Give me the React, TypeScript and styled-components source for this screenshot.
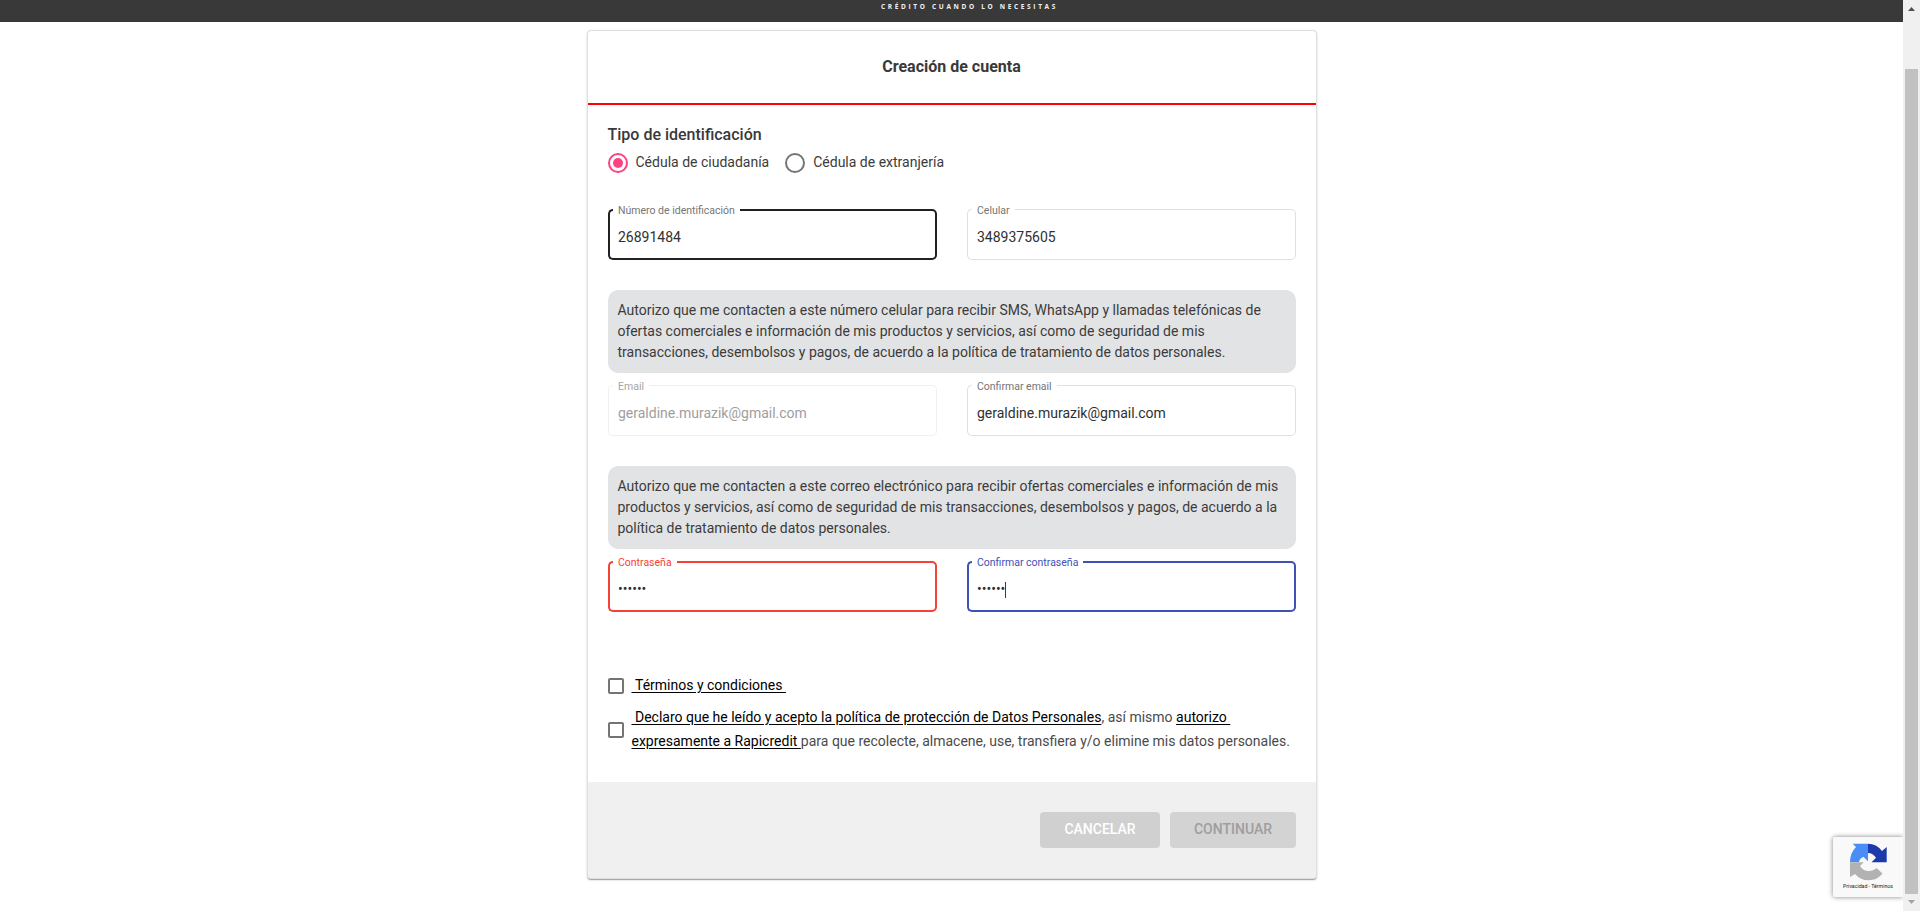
import React from "react";
import styled, { createGlobalStyle } from "styled-components";

const GlobalStyle = createGlobalStyle`
  *, *::before, *::after { box-sizing: border-box; }
  html, body { margin: 0; height: 100%; overflow: hidden; background: #fff; }
  body { font-family: Roboto, "Liberation Sans", sans-serif; font-size: 14px; color: #3b3b3b; }
`;

const Screen = styled.div`
  display: flex;
  width: 1920px;
  height: 911px;
  overflow: hidden;
`;

const Page = styled.div`
  position: relative;
  flex: 1;
  display: flex;
  flex-direction: column;
  align-items: center;
  overflow: hidden;
`;

const TopBar = styled.header`
  display: flex;
  justify-content: center;
  width: 100%;
  height: 22px;
  flex: none;
  padding-left: 36px;
  background: #393939;
`;

const Tagline = styled.span`
  margin-top: 2px;
  font: 700 6.5px/9px "Open Sans", sans-serif;
  letter-spacing: 2.67px;
  color: #f2f2f2;
  white-space: nowrap;
`;

const Card = styled.main`
  width: 730px;
  height: 849px;
  margin-top: 8px;
  flex: none;
  display: flex;
  flex-direction: column;
  border: 1px solid #dedede;
  border-radius: 4px;
  background: #fff;
  overflow: hidden;
  box-shadow: 0 2px 1px -1px rgba(0, 0, 0, 0.2), 0 1px 1px 0 rgba(0, 0, 0, 0.14),
    0 1px 3px 0 rgba(0, 0, 0, 0.12);
`;

const CardHeader = styled.h1`
  height: 74px;
  margin: 0;
  padding-bottom: 2px;
  display: flex;
  align-items: center;
  justify-content: center;
  border-bottom: 2px solid #f00;
  font-size: 16px;
  font-weight: 700;
  letter-spacing: 0;
  color: #393939;
`;

const Body = styled.form`
  display: flex;
  flex-direction: column;
  height: 677px;
  padding: 18px 20px 0;
`;

const GroupTitle = styled.h2`
  margin: 0;
  font-size: 16px;
  line-height: 24px;
  font-weight: 500;
  color: #393939;
`;

const RadioRow = styled.div`
  display: flex;
  gap: 16px;
  height: 20px;
  margin-top: 6px;
  margin-bottom: 36px;
`;

const RadioOption = styled.label`
  display: flex;
  align-items: center;
  gap: 8px;
  line-height: 18px;
  white-space: nowrap;

  span { position: relative; top: -1px; }
`;

const RadioMark = styled.i<{ $on?: boolean }>`
  width: 20px;
  height: 20px;
  border-radius: 50%;
  border: 2px solid ${(p) => (p.$on ? "#ff4081" : "#757575")};
  display: grid;
  place-items: center;

  &::after {
    content: "";
    width: 10px;
    height: 10px;
    border-radius: 50%;
    background: ${(p) => (p.$on ? "#ff4081" : "transparent")};
  }
`;

const FieldRow = styled.div`
  display: grid;
  grid-template-columns: 329px 329px;
  column-gap: 30px;
  height: 51px;
`;

type Tone = "idle" | "hover" | "disabled" | "error" | "focus";
const outlineColor: Record<Tone, string> = {
  idle: "#e0e0e0",
  hover: "#212121",
  disabled: "#f0f0f0",
  error: "#f44336",
  focus: "#3f51b5",
};
const labelColor: Record<Tone, string> = {
  idle: "#757575",
  hover: "#757575",
  disabled: "#a5a5a5",
  error: "#f44336",
  focus: "#3f51b5",
};
const thickness = (t: Tone) => (t === "idle" || t === "disabled" ? "1px" : "2px");

const FieldBox = styled.div<{ $tone: Tone }>`
  display: grid;
  grid-template: 51px / 329px;
  --line: ${(p) => thickness(p.$tone)} solid ${(p) => outlineColor[p.$tone]};
`;

const Outline = styled.div`
  grid-area: 1 / 1;
  display: flex;
`;

const OutlineStart = styled.div`
  width: 5px;
  border: var(--line);
  border-right: none;
  border-radius: 5px 0 0 5px;
`;

const OutlineEnd = styled.div`
  flex: 1;
  border: var(--line);
  border-left: none;
  border-radius: 0 5px 5px 0;
`;

const Notch = styled.div<{ $tone: Tone }>`
  padding: 0 5px 0 5.5px;
  border-bottom: var(--line);
  font-size: 10.5px;
  line-height: 12px;
  white-space: nowrap;
  color: ${(p) => labelColor[p.$tone]};

  span { display: block; margin-top: -4px; }
`;

const Value = styled.div<{ $tone: Tone }>`
  grid-area: 1 / 1;
  display: flex;
  align-items: center;
  padding: 4px 10.5px 0;
  line-height: 16px;
  color: ${(p) => (p.$tone === "disabled" ? "#9e9e9e" : "#303030")};
`;

const Caret = styled.i`
  width: 1px;
  height: 16px;
  margin-top: 2px;
  background: #26348b;
`;

const Note = styled.p<{ $gapAfter: number }>`
  width: 688px;
  height: 83px;
  margin: 30px 0 ${(p) => p.$gapAfter}px;
  padding: 10px;
  border-radius: 10px;
  background: #e2e3e5;
  line-height: 21px;
  white-space: nowrap;
`;

const Consent = styled.label<{ $top: number }>`
  display: flex;
  align-items: center;
  gap: 8px;
  margin-top: ${(p) => p.$top}px;
  line-height: 24px;
  color: #4a4a4a;
  white-space: nowrap;

  u {
    color: #000;
    white-space: pre;
    text-underline-offset: 2px;
    text-decoration-skip-ink: auto;
  }
`;

const CheckMark = styled.i`
  width: 16px;
  height: 16px;
  flex: none;
  border: 2px solid #757575;
  border-radius: 2px;
`;

const ConsentText = styled.span`
  position: relative;
  top: -1px;
`;

const Footer = styled.footer`
  flex: 1;
  display: flex;
  justify-content: flex-end;
  gap: 10px;
  padding: 30px 20px 0;
  background: #f0f0f0;
`;

const Action = styled.button<{ $kind: "cancel" | "next" }>`
  width: ${(p) => (p.$kind === "cancel" ? 120 : 126)}px;
  height: 36px;
  padding: 0 0 2px 1px;
  border: 0;
  border-radius: 4px;
  font: 500 14px/34px Roboto, sans-serif;
  background: ${(p) => (p.$kind === "cancel" ? "#d0d0d0" : "#d3d3d3")};
  color: ${(p) => (p.$kind === "cancel" ? "#fff" : "#9e9e9e")};
`;

const Badge = styled.aside`
  position: absolute;
  right: 0;
  top: 837px;
  width: 70px;
  height: 60px;
  border-radius: 2px 0 0 2px;
  background: #f9f9f9;
  box-shadow: 0 0 5px gray;
  display: flex;
  flex-direction: column;
  align-items: center;
  padding-top: 6px;
`;

const BadgeText = styled.span`
  font: 5.2px/9px Roboto, sans-serif;
  color: #222;
  white-space: nowrap;
`;

const Scrollbar = styled.div`
  width: 17px;
  display: flex;
  flex-direction: column;
  align-items: center;
  background: #f0f0f0;
`;

const ScrollThumb = styled.div`
  width: 13px;
  height: 825px;
  margin-top: 52px;
  background: #c1c1c1;
`;

const Arrow = styled.svg`
  width: 17px;
  height: 17px;
  flex: none;
`;

function Field({ label, value, tone = "idle", caret }: { label: string; value: string; tone?: Tone; caret?: boolean }) {
  return (
    <FieldBox $tone={tone}>
      <Outline>
        <OutlineStart />
        <Notch $tone={tone}><span>{label}</span></Notch>
        <OutlineEnd />
      </Outline>
      <Value $tone={tone}>{value}{caret && <Caret />}</Value>
    </FieldBox>
  );
}

export default function App() {
  return (
    <>
      <GlobalStyle />
      <Screen>
        <Page>
          <TopBar><Tagline>CRÉDITO CUANDO LO NECESITAS</Tagline></TopBar>
          <Card>
            <CardHeader>Creación de cuenta</CardHeader>
            <Body>
              <GroupTitle>Tipo de identificación</GroupTitle>
              <RadioRow>
                <RadioOption><RadioMark $on /><span>Cédula de ciudadanía</span></RadioOption>
                <RadioOption><RadioMark /><span>Cédula de extranjería</span></RadioOption>
              </RadioRow>
              <FieldRow>
                <Field label="Número de identificación" value="26891484" tone="hover" />
                <Field label="Celular" value="3489375605" />
              </FieldRow>
              <Note $gapAfter={12}>
                Autorizo que me contacten a este número celular para recibir SMS, WhatsApp y llamadas telefónicas de<br />
                ofertas comerciales e información de mis productos y servicios, así como de seguridad de mis<br />
                transacciones, desembolsos y pagos, de acuerdo a la política de tratamiento de datos personales.
              </Note>
              <FieldRow>
                <Field label="Email" value="geraldine.murazik@gmail.com" tone="disabled" />
                <Field label="Confirmar email" value="geraldine.murazik@gmail.com" />
              </FieldRow>
              <Note $gapAfter={12}>
                Autorizo que me contacten a este correo electrónico para recibir ofertas comerciales e información de mis<br />
                productos y servicios, así como de seguridad de mis transacciones, desembolsos y pagos, de acuerdo a la<br />
                política de tratamiento de datos personales.
              </Note>
              <FieldRow>
                <Field label="Contraseña" value="••••••" tone="error" />
                <Field label="Confirmar contraseña" value="••••••" tone="focus" caret />
              </FieldRow>
              <Consent $top={62}>
                <CheckMark />
                <ConsentText><u>{"\u00a0Términos y condiciones\u00a0"}</u></ConsentText>
              </Consent>
              <Consent $top={8}>
                <CheckMark />
                <ConsentText>
                  <u>{"\u00a0Declaro que he leído y acepto la política de protección de Datos Personales"}</u>, así mismo <u>{"autorizo\u00a0"}</u><br />
                  <u>{"expresamente a Rapicredit "}</u>para que recolecte, almacene, use, transfiera y/o elimine mis datos personales.
                </ConsentText>
              </Consent>
            </Body>
            <Footer>
              <Action $kind="cancel">CANCELAR</Action>
              <Action $kind="next">CONTINUAR</Action>
            </Footer>
          </Card>
          <Badge>
            <svg width="38" height="39" viewBox="0 0 38 39">
              <path d="M3.7 0.7H19V18.3L14.4 13.7Q10 16 10 19.3H1Q1 10 7 4Z" fill="#4a8df6" />
              <path d="M19 0.7Q27.5 0.7 33 8L37.7 4V19.3H22.5L27 14.8Q24 10 19 10Z" fill="#1c3aa9" />
              <path d="M1 19.3H14.7L11 23Q14 28 19.5 28Q24.5 28 27.5 25L33.5 30.5Q28.5 37.3 19.500 37.3Q11.500 37.3 6 31L1 34Z" fill="#b2b2b2" />
            </svg>
            <BadgeText>Privacidad - Términos</BadgeText>
          </Badge>
        </Page>
        <Scrollbar>
          <Arrow viewBox="0 0 17 17"><path d="M5 11h7L8.5 7z" fill="#505050" /></Arrow>
          <ScrollThumb />
          <Arrow viewBox="0 0 17 17"><path d="M5 6h7L8.5 10z" fill="#a3a3a3" /></Arrow>
        </Scrollbar>
      </Screen>
    </>
  );
}
